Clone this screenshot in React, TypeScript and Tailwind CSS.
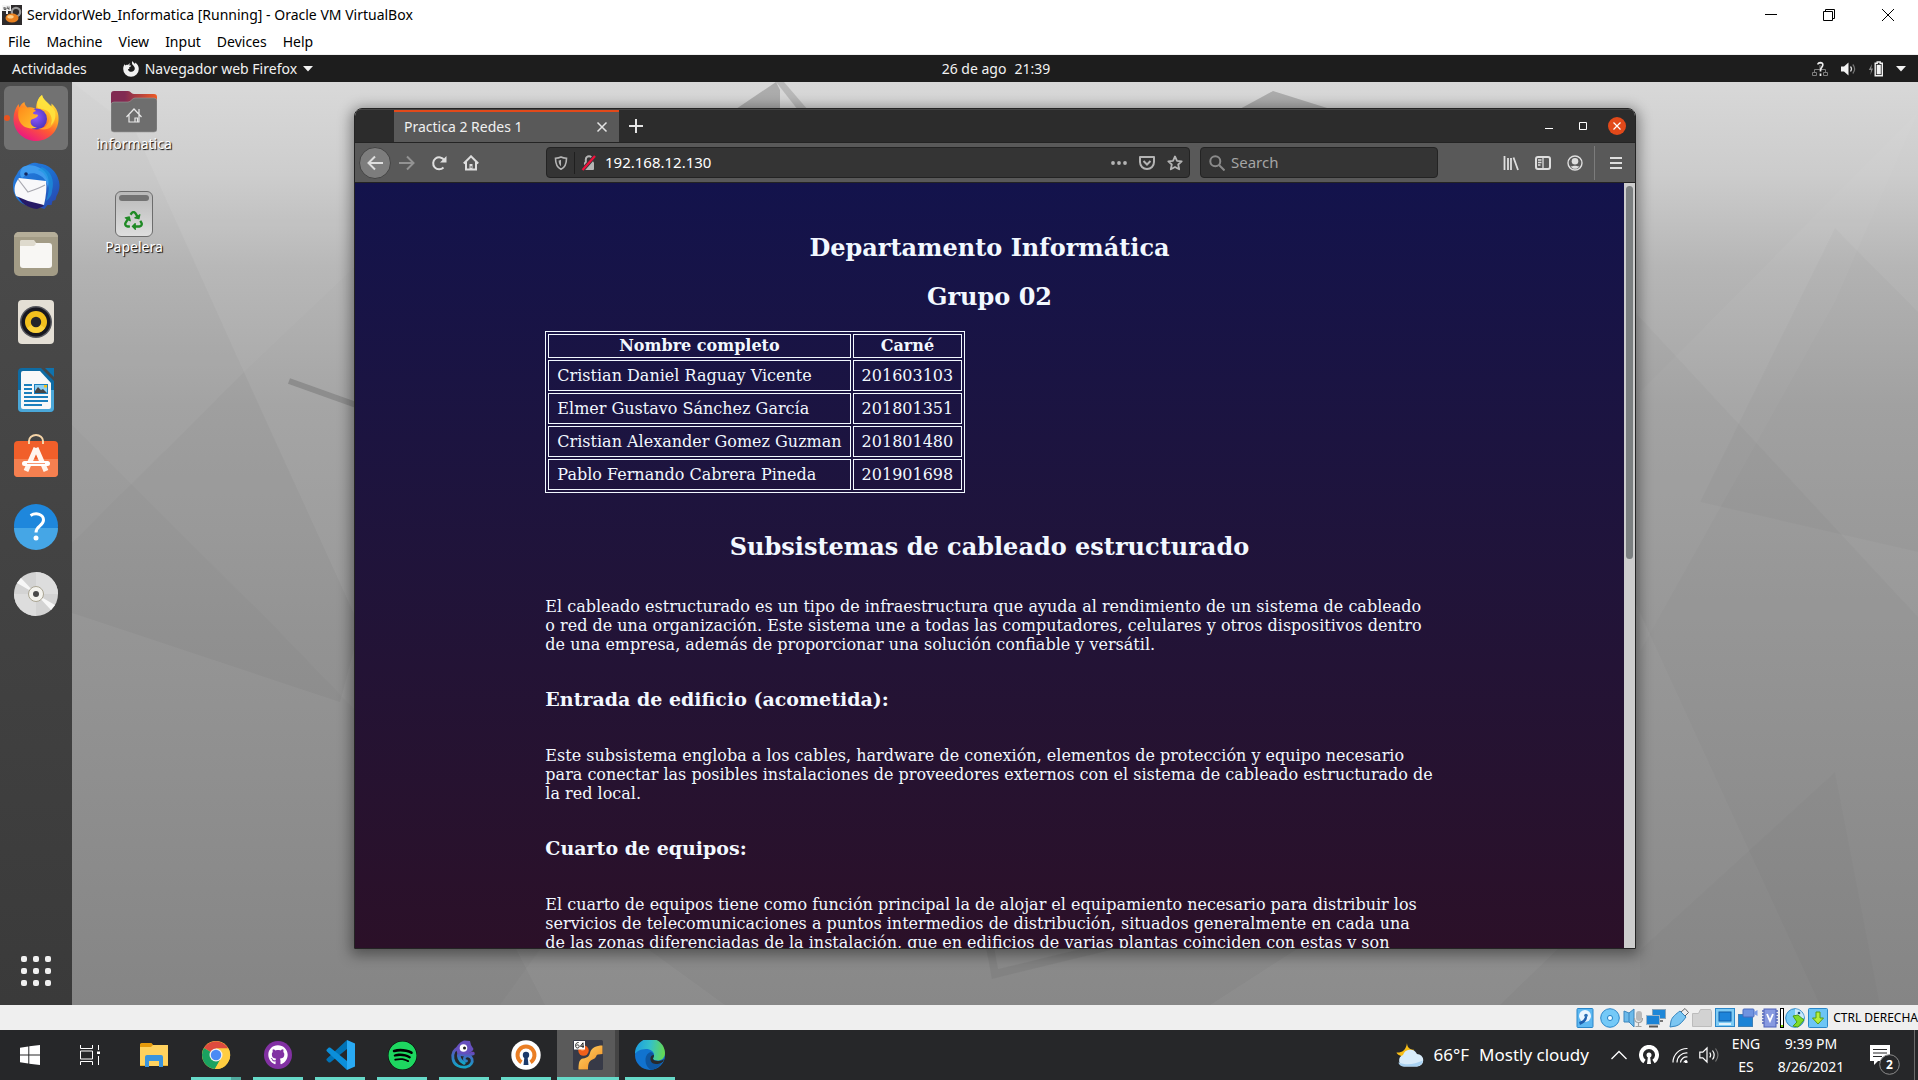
import React from 'react';
import { FaGithub, FaSpotify, FaRecycle } from 'react-icons/fa';

/* ---------- VirtualBox host window ---------- */

function VBoxLogo({ className }: { className: string }) {
  return (
    <svg viewBox="0 0 30 30" className={className} aria-hidden="true">
      <defs>
        <linearGradient id="vbGold" x1="0" y1="0" x2="1" y2="1">
          <stop offset="0" stopColor="#ffd56b" />
          <stop offset="1" stopColor="#f08a1c" />
        </linearGradient>
      </defs>
      <rect width="30" height="30" rx="1.5" fill="#373a47" />
      <circle cx="10.5" cy="10.5" r="5.2" fill="#f2601a" />
      <circle cx="9.5" cy="9" r="2" fill="#ff8d45" />
      <path d="M29.500 5.500C23 5.500 18.500 7.500 17 13c-.8 3-2.500 5-7 5.500-3.500.6-4.500 4-4.500 11H15c0-6 1-9 5.500-10.500C24 17.500 22.500 15 25 14.500l4.500-.5z" fill="url(#vbGold)" />
      <rect x="1" y="1" width="11" height="8.500" fill="#fff" />
      <path d="M5.600 2.500c-2 0-3 1.200-3 3s.9 2.500 1.900 2.500 1.700-.7 1.700-1.600-.7-1.500-1.600-1.500c-.6 0-1 .2-1.300.6M10 8V2.800L7.400 6.300h3.600" stroke="#222" strokeWidth="1" fill="none" />
    </svg>
  );
}

function TitleLogo() {
  return (
    <svg viewBox="0 0 20 20" className="size-5" aria-hidden="true">
      <rect width="20" height="20" fill="#2e2b2c" />
      <circle cx="14" cy="7" r="4.200" fill="none" stroke="#9a9a9a" strokeWidth="2.200" />
      <ellipse cx="10" cy="13" rx="6.500" ry="4.500" fill="#e8801f" />
      <ellipse cx="8.500" cy="11.800" rx="3.200" ry="1.800" fill="#ffd08a" />
      <path d="M0 0h9v6H6v3H4V6H0z" fill="#f4f4f4" />
      <path d="M2 2v2.500h2V3H2M7 1.500V5M5.300 1.500v2H7" stroke="#444" strokeWidth=".8" fill="none" />
    </svg>
  );
}

function HostTitle() {
  return (
    <header className="bg-white text-black">
      <div className="flex h-[29px] items-center">
        <div className="flex flex-1 items-center gap-[5px] pl-0.5 text-sm">
          <TitleLogo />
          <h1>ServidorWeb_Informatica [Running] - Oracle VM VirtualBox</h1>
        </div>
        <button aria-label="Minimize" className="grid h-7 w-[58px] place-items-center">
          <svg viewBox="0 0 12 12" className="size-3"><path d="M0 5.500h12" stroke="#000" /></svg>
        </button>
        <button aria-label="Restore" className="grid h-7 w-[58px] place-items-center">
          <svg viewBox="0 0 12 12" className="size-3"><path d="M.5 2.500h9v9h-9zM2.500 2.500v-2h9v9h-2" fill="none" stroke="#000" /></svg>
        </button>
        <button aria-label="Close" className="grid h-7 w-[60px] place-items-center">
          <svg viewBox="0 0 12 12" className="size-3"><path d="M0 0l12 12M12 0L0 12" stroke="#000" /></svg>
        </button>
      </div>
      <nav className="flex h-[26px] items-center border-b border-[#f0f0f0] text-sm">
        {['File', 'Machine', 'View', 'Input', 'Devices', 'Help'].map((m) => (
          <button key={m} className="px-2">{m}</button>
        ))}
      </nav>
    </header>
  );
}

/* ---------- Ubuntu top bar ---------- */

function UbuntuBar() {
  return (
    <div className="grid h-[27px] shrink-0 grid-cols-3 items-center bg-[#1d1d1d] text-sm text-[#f2f2f2]">
      <div className="flex items-center gap-9 pl-3">
        <button>Actividades</button>
        <button className="flex items-center gap-1.5">
          <svg viewBox="0 0 16 16" className="size-4" fill="#f2f2f2">
            <path d="M9.500 0c.3 1.200 1.500 2 2.500 3 .2-.5.200-1 .1-1.500C14.500 3 15.800 5.300 15.800 8a7.800 7.800 0 0 1-15.600 0C.2 6 .8 4.300 1.800 3c0 .6.100 1 .3 1.400C2.800 3.700 4 3.500 5 3.900c.8-.9 1.500-1.200 2.300-1.300-.8.700-1 1.400-.9 1.900h1.800c-.2 1.100-1.400 1.400-2 1.800.1 1 .2 1.400.2 1.400-.8 0-1.200.2-1.500.5.5 1.800 1.800 2.600 3.400 2.600 2 0 3.500-1.400 3.500-3.300 0-1.500-.9-2.500-1.700-3.300C9 3.300 8.400 1.600 9.500 0z" />
          </svg>
          <span>Navegador web Firefox</span>
          <svg viewBox="0 0 10 6" className="h-1.5 w-2.5"><path d="M0 0h10L5 5.500z" fill="#f2f2f2" /></svg>
        </button>
      </div>
      <div className="flex justify-center gap-2 pl-[74px]">
        <span>26 de ago</span>
        <span>21:39</span>
      </div>
      <div className="flex items-center justify-end gap-3 pr-3">
        <svg viewBox="0 0 16 16" className="size-4" aria-label="Red">
          <path d="M8 4v4M2.500 11V8.500h11V11M.5 11.500h4v3h-4zM11.500 11.500h4v3h-4zM5.500 2.500h4" fill="none" stroke="#7d7d7d" />
          <path d="M6 3.500C6 1 11 .8 10.800 4 10.700 6.300 8.500 6.500 8.500 9.500v1M8.500 12.500v2.500" fill="none" stroke="#eee" strokeWidth="1.700" />
        </svg>
        <svg viewBox="0 0 16 14" className="h-3.5 w-4" aria-label="Volumen">
          <path d="M1 4.500h3L8.500.5v13L4 9.500H1z" fill="#f2f2f2" />
          <path d="M10.500 4.500c1.300 1.500 1.300 3.500 0 5" fill="none" stroke="#ddd" strokeWidth="1.200" />
          <path d="M12.800 2.500c2.300 2.800 2.300 6.200 0 9" fill="none" stroke="#777" strokeWidth="1.200" />
        </svg>
        <svg viewBox="0 0 16 16" className="size-4" aria-label="Batería">
          <path d="M4 3L.8 9H3l-.6 5L5 7.500H3.200z" fill="#8a8a8a" />
          <path d="M7.200 2.200h2V1h3v1.200h2.100v12.600H7.200z" fill="none" stroke="#f2f2f2" strokeWidth="1.400" />
          <rect x="8.700" y="3.800" width="4.100" height="9.500" fill="#f2f2f2" />
        </svg>
        <svg viewBox="0 0 10 6" className="h-1.5 w-2.5"><path d="M0 0h10L5 5.500z" fill="#f2f2f2" /></svg>
      </div>
    </div>
  );
}

/* ---------- Dock ---------- */

function FirefoxIcon() {
  return (
    <svg viewBox="0 0 48 48" className="size-12">
      <defs>
        <linearGradient id="ffBody" x1=".85" y1="0" x2=".25" y2="1">
          <stop offset="0" stopColor="#fff04a" />
          <stop offset=".35" stopColor="#ffb024" />
          <stop offset=".62" stopColor="#ff5a32" />
          <stop offset="1" stopColor="#e8118a" />
        </linearGradient>
        <radialGradient id="ffGlobe" cx=".45" cy=".4" r=".65">
          <stop offset="0" stopColor="#8f5bff" />
          <stop offset="1" stopColor="#4b32b8" />
        </radialGradient>
        <linearGradient id="ffFox" x1="0" y1="0" x2="1" y2="1">
          <stop offset="0" stopColor="#ff8a1a" />
          <stop offset="1" stopColor="#ffc62e" />
        </linearGradient>
      </defs>
      <path d="M30 1c1 5 6 8 9 12 .5-1 .6-2 .4-3.500C45 14 47 20 46.500 26 46 38 36 47 24 47S1.500 37.500 1.500 25c0-6 2-11 5-15l1 3.500C8.500 11 10 9 12.500 8c0 2 1 4 3 5.500 4-1 7.500.5 8.500 1.500C24 9 26 4 30 1z" fill="url(#ffBody)" />
      <circle cx="24.500" cy="25" r="10.500" fill="url(#ffGlobe)" />
      <path d="M7.500 13.500C12 12 15.500 13.500 16.500 15c3-1 6 0 7.500 2-2 .5-3 1.500-3 2.500 2 1.500 5 .5 5 2-1.500 3-5 3-7 4.500-1.500 4 1.500 7 6 7.500C17 36 10 33 7.500 27c-2-5-1.500-10 0-13.500z" fill="url(#ffFox)" />
      <path d="M27 14c6 0 10 4 10.500 9 .5 7-5 12-11.500 11.500 9 3.500 17-2 17.500-11C43.500 18 41 14 38 12c-3-1-8-1-11 2z" fill="#ffb52b" opacity=".75" />
      <path d="M30 1c-4 3-5.500 8-4.500 12.500 3 2 8 1 11.500 5 3 4 3.500 9 1.500 13 4-3 6-9 4.500-14-1.500-4-5-6.500-7.500-9C33 6 30.500 4 30 1z" fill="#ffe63f" opacity=".85" />
    </svg>
  );
}

function ThunderbirdIcon() {
  return (
    <svg viewBox="0 0 48 48" className="size-12">
      <defs>
        <linearGradient id="tbBlue" x1="0" y1="0" x2="1" y2="1">
          <stop offset="0" stopColor="#2a7de0" />
          <stop offset=".5" stopColor="#1d6fd0" />
          <stop offset="1" stopColor="#2b3fa8" />
        </linearGradient>
      </defs>
      <path d="M21 1c4-1 6 1 9 1 10 2 17 11 17.500 21 0 4-1 8-3 11l-1 4-3 1-1 4-4 0-3 4-3-1-7-1C11 44 5 39 2 31c-2-7-1-14 3-19 1-3 3-5 6-7 3 0 7-4 10-4z" fill="url(#tbBlue)" />
      <path d="M11 5c5-3 12-2 17 1 8 4 10 12 8 20-1-6-4-11-9-13-5-3-12-2-17 3-3-3-2-8 1-11z" fill="#3f9bee" />
      <path d="M30 5c9 4 13 13 10 24 0 4-3 8-6 10 3-8 4-16 1-22-2-5-5-8-9-9z" fill="#1a9ae0" opacity=".6" />
      <path d="M5 32c3 9 11 14 20 15l7-3-6-5-18-7z" fill="#261a66" />
      <path d="M7 16l27 3c1 7 0 15-2 24L16 39 4 34C1 27 3 21 7 16z" fill="#f8f8fa" />
      <path d="M6 17l10 13c6-2 12-4 17-7" fill="none" stroke="#a8a8b0" strokeWidth="1.200" />
      <circle cx="14" cy="12" r="1.800" fill="#152860" />
    </svg>
  );
}

function FilesIcon() {
  return (
    <svg viewBox="0 0 48 48" className="size-12">
      <rect x="2" y="2" width="44" height="44" rx="5" fill="#a39c86" />
      <path d="M2 7a5 5 0 0 1 5-5h34a5 5 0 0 1 5 5z" fill="#b5ae99" />
      <path d="M8 12a2 2 0 0 1 2-2h12l3 4h13v8H8z" fill="#dedacd" />
      <rect x="8" y="13" width="32" height="25" rx="3" fill="#f8f7f4" />
      <path d="M8 16v-4a2 2 0 0 1 2-2h10l4 4-2 2z" fill="#dedacd" />
    </svg>
  );
}

function RhythmboxIcon() {
  return (
    <svg viewBox="0 0 48 48" className="size-12">
      <rect x="6" y="2" width="36" height="44" rx="4" fill="#e4dfd5" />
      <circle cx="24" cy="24" r="16" fill="#55565c" />
      <circle cx="24" cy="24" r="14.500" fill="#17171f" />
      <circle cx="24" cy="24" r="11" fill="#f2bf1d" />
      <path d="M24 35a11 11 0 0 0 9-5L24 24l-9 6a11 11 0 0 0 9 5z" fill="#ffd84a" opacity=".7" />
      <circle cx="24" cy="24" r="5.200" fill="#24242a" />
    </svg>
  );
}

function WriterIcon() {
  return (
    <svg viewBox="0 0 48 48" className="size-12">
      <path d="M10 2h19l13 13v27a4 4 0 0 1-4 4H10a4 4 0 0 1-4-4V6a4 4 0 0 1 4-4z" fill="#0e6ba3" />
      <path d="M6 24h36v18a4 4 0 0 1-4 4H10a4 4 0 0 1-4-4z" fill="#4aa7d8" />
      <path d="M33 2h9v9z" fill="#0f73ae" />
      <path d="M11 5h17l11 12v24a2 2 0 0 1-2 2H11a2 2 0 0 1-2-2V7a2 2 0 0 1 2-2z" fill="#f8f8f8" />
      <path d="M12 19h8M12 23h8M12 27h8M12 31h24M12 35h24M12 39h18" stroke="#1a7fbd" strokeWidth="2" />
      <rect x="22.500" y="18.500" width="13" height="9" fill="#8fd0f2" stroke="#1a7fbd" />
      <path d="M23 27v-2l3-4 3 3 2-1 4 4z" fill="#444" />
      <rect x="32" y="19" width="3" height="2.500" fill="#f4c21c" />
    </svg>
  );
}

function SoftwareIcon() {
  return (
    <svg viewBox="0 0 48 48" className="size-12">
      <path d="M17 9V7a7 6 0 0 1 14 0v2" fill="none" stroke="#f6d5a8" strokeWidth="2" />
      <rect x="2" y="7" width="44" height="36" rx="4" fill="#f15f2a" />
      <path d="M2 25h44v14a4 4 0 0 1-4 4H6a4 4 0 0 1-4-4z" fill="#f58050" />
      <path d="M17 10V7M31 10V7" stroke="#f6d5a8" strokeWidth="2" />
      <path d="M24 14L14 37M24 14l10 23" stroke="#fff5ee" strokeWidth="5" />
      <rect x="10" y="27" width="28" height="5" rx="2.500" fill="#fff" />
      <path d="M15 29.500h18" stroke="#f58050" strokeWidth=".8" />
    </svg>
  );
}

function HelpIcon() {
  return (
    <svg viewBox="0 0 48 48" className="size-12">
      <circle cx="24" cy="24" r="22" fill="#1e87dc" />
      <path d="M2 26h44a22 22 0 0 1-44 0z" fill="#45a6e6" />
      <path d="M18.500 13.500c6-3.500 13-1 13 4.500 0 6-7.500 6-7.500 12.500" fill="none" stroke="#fff" strokeWidth="3" />
      <circle cx="24" cy="36" r="2.500" fill="#fff" />
    </svg>
  );
}

function DiscIcon() {
  return (
    <svg viewBox="0 0 48 48" className="size-12">
      <circle cx="24" cy="24" r="22" fill="#d3d3d3" />
      <path d="M24 24V2a22 22 0 0 1 22 22zM24 24v22A22 22 0 0 1 2 24z" fill="#dddddd" />
      <path d="M24 24L5 13l4-5zM24 24l19 11-4 5z" fill="#f7f7f7" />
      <circle cx="24" cy="24" r="7.500" fill="#f4f3ee" stroke="#aaa593" />
      <circle cx="24" cy="24" r="3" fill="#4a4a4a" />
    </svg>
  );
}

const dock: [string, () => React.JSX.Element][] = [
  ['Firefox', FirefoxIcon],
  ['Thunderbird', ThunderbirdIcon],
  ['Archivos', FilesIcon],
  ['Rhythmbox', RhythmboxIcon],
  ['LibreOffice Writer', WriterIcon],
  ['Ubuntu Software', SoftwareIcon],
  ['Ayuda', HelpIcon],
  ['Disco', DiscIcon],
];

function Dock() {
  return (
    <aside className="relative flex w-[72px] shrink-0 flex-col items-center gap-1 bg-linear-to-b from-[#4d4d4d] via-[#434343] to-[#3a3a3a] pt-1">
      {dock.map(([name, Icon], i) => (
        <button
          key={name}
          aria-label={name}
          className={i === 0 ? 'grid size-16 place-items-center rounded-md bg-[#727272]' : 'grid size-16 place-items-center'}
        >
          {i === 0 && <span className="absolute left-1 size-1.5 rounded-full bg-[#e95420]" />}
          <Icon />
        </button>
      ))}
      <button aria-label="Mostrar aplicaciones" className="mt-auto mb-[19px] grid grid-cols-3 gap-1.5">
        {Array.from({ length: 9 }, (_, i) => (
          <span key={i} className="size-1.5 rounded-[2px] bg-[#f0f0f0]" />
        ))}
      </button>
    </aside>
  );
}

/* ---------- Desktop ---------- */

function Wallpaper() {
  return (
    <svg viewBox="0 0 1918 923" preserveAspectRatio="none" className="absolute inset-0 size-full" aria-hidden="true">
      <defs>
        <linearGradient id="wall" x1="0" y1="0" x2="0" y2="1">
          <stop offset="0" stopColor="#d8d8d8" />
          <stop offset=".1" stopColor="#cccccc" />
          <stop offset=".2" stopColor="#b6b6b6" />
          <stop offset=".35" stopColor="#a5a5a5" />
          <stop offset=".6" stopColor="#989898" />
          <stop offset="1" stopColor="#888888" />
        </linearGradient>
      </defs>
      <rect width="1918" height="923" fill="url(#wall)" />
      <path d="M135 48L244 290 72 461V0z" fill="#000" opacity=".012" />
      <path d="M244 290L72 461v70L340 620 360 545z" fill="#000" opacity=".03" />
      <path d="M72 343L278 548 560 840 500 923H72z" fill="#000" opacity=".015" />
      <path d="M135 48L244 290 360 180V0H150z" fill="#fff" opacity=".03" />
      <path d="M1918 30L1640 310v260l195-350z" fill="#fff" opacity=".03" />
      <path d="M1835 146L1918 230v240L1700 420z" fill="#000" opacity=".02" />
      <path d="M1635 230L1918 535v388H1820L1635 520z" fill="#000" opacity=".018" />
      <path d="M1835 690L1640 868v55h240z" fill="#000" opacity=".015" />
      <path d="M515 865L545 923h180l-80-58z" fill="#fff" opacity=".04" />
      <path d="M1300 865l-90 58h290l60-58z" fill="#fff" opacity=".04" />
      <path d="M289 299l70 25" stroke="#8d8d8d" strokeWidth="6" />
      <path d="M736 27L776 0l4 8v20z" fill="#000" opacity=".2" />
      <path d="M776 0h8l24 28h-10z" fill="#000" opacity=".14" />
      <path d="M1238 28l35-19 70 22z" fill="#000" opacity=".2" />
      <path d="M990 865l5 27 115-28" stroke="#000" strokeWidth="8" fill="none" opacity=".05" />
    </svg>
  );
}

const iconLabel = 'text-sm leading-5 text-white [text-shadow:1px_1px_1px_#000]';

function DesktopIcons() {
  return (
    <div className="relative flex w-[124px] flex-col items-center gap-[37px] pt-2">
      <button className="flex flex-col items-center">
        <svg viewBox="0 0 46 44" className="h-11 w-[46px]">
          <defs>
            <linearGradient id="homeTop" x1="0" x2="1" y1="0" y2="0">
              <stop offset=".3" stopColor="#812a52" />
              <stop offset="1" stopColor="#ee5a24" />
            </linearGradient>
          </defs>
          <path d="M3 1h14c3 0 3 3 6 3h20a3 3 0 0 1 3 3v12H0V4a3 3 0 0 1 3-3z" fill="url(#homeTop)" />
          <path d="M3 12h14c3 0 4-4 7-4h19a3 3 0 0 1 3 3v28a3 3 0 0 1-3 3H3a3 3 0 0 1-3-3V15a3 3 0 0 1 3-3z" fill="#6e6e6e" stroke="#999" strokeWidth=".6" />
          <path d="M15.500 27L23 19l7.500 8M18 25v7h10v-7M24 32v-4h2.500v4M28 24v-5" fill="none" stroke="#e8e8e8" strokeWidth="1.200" />
        </svg>
        <span className={iconLabel}>informatica</span>
      </button>
      <button className="flex flex-col items-center">
        <span className="flex h-[46px] w-[38px] flex-col items-center gap-2.5 rounded-md border border-[#6d6d6d] bg-linear-to-b from-[#b9b9b9] to-[#dedede] pt-[3px]">
          <span className="h-1.5 w-[30px] rounded-sm bg-[#737373]" />
          <FaRecycle className="size-[19px] text-[#1f8a25]" />
        </span>
        <span className={iconLabel}>Papelera</span>
      </button>
    </div>
  );
}

/* ---------- Firefox window ---------- */

function TabBar() {
  return (
    <div className="flex h-[33px] shrink-0 items-stretch border-t border-[#454545] bg-[#2c2c2c] pl-[39px]">
      <div className="flex w-[225px] items-center justify-between border-t-2 border-[#e2491a] bg-[#595959] pr-[11px] pl-2.5 text-sm">
        <span>Practica 2 Redes 1</span>
        <button aria-label="Cerrar pestaña">
          <svg viewBox="0 0 12 12" className="size-3"><path d="M1.500 1.500l9 9M10.500 1.500l-9 9" stroke="#e4e4e4" strokeWidth="1.500" /></svg>
        </button>
      </div>
      <button aria-label="Nueva pestaña" className="grid w-[34px] place-items-center">
        <svg viewBox="0 0 14 14" className="size-3.5"><path d="M7 0v14M0 7h14" stroke="#e4e4e4" strokeWidth="2" /></svg>
      </button>
      <div className="ml-auto flex items-center gap-4 pr-[9px]">
        <button aria-label="Minimizar" className="grid size-[18px] place-items-center">
          <svg viewBox="0 0 8 8" className="size-2"><path d="M0 6.500h8" stroke="#fff" /></svg>
        </button>
        <button aria-label="Maximizar" className="grid size-[18px] place-items-center">
          <svg viewBox="0 0 8 8" className="size-2"><path d="M.5.5h7v7h-7z" fill="none" stroke="#fff" /></svg>
        </button>
        <button aria-label="Cerrar" className="grid size-[18px] place-items-center rounded-full bg-[#e2491a]">
          <svg viewBox="0 0 8 8" className="size-2"><path d="M.5.5l7 7M7.500.5l-7 7" stroke="#fff" strokeWidth="1.200" /></svg>
        </button>
      </div>
    </div>
  );
}

function NavBar() {
  const s = { fill: 'none', stroke: '#dedede', strokeWidth: 2 } as const;
  const m = { fill: 'none', stroke: '#b4b4b4', strokeWidth: 2 } as const;
  return (
    <div className="flex h-[41px] shrink-0 items-center border-t border-b border-[#242424] bg-[#595959] pr-[11px] pl-1">
      <div className="flex w-[187px] shrink-0 items-center gap-4">
        <button aria-label="Atrás" className="-mr-2 grid size-8 place-items-center rounded-full border border-[#444] bg-[#7d7d7d]">
          <svg viewBox="0 0 16 16" className="size-4"><path d="M16 8H1.500M8 1.500L1.500 8 8 14.500" {...s} /></svg>
        </button>
        <button aria-label="Adelante">
          <svg viewBox="0 0 16 16" className="size-4"><path d="M0 8h14.500M8 1.500L14.500 8 8 14.500" fill="none" stroke="#939393" strokeWidth="2" /></svg>
        </button>
        <button aria-label="Recargar">
          <svg viewBox="0 0 16 16" className="size-4"><path d="M12.500 12.500A6 6 0 1 1 13.200 5" {...s} /><path d="M15.500 1v6.500H9z" fill="#dedede" /></svg>
        </button>
        <button aria-label="Inicio">
          <svg viewBox="0 0 16 16" className="size-4"><path d="M.8 8.500L8 1.300l7.200 7.200M3 7v7.500h10V7" {...s} /><path d="M6.500 9h3v6h-3z" fill="#dedede" /><path d="M7.600 11h1v2h-1z" fill="#595959" /></svg>
        </button>
      </div>
      <div className="flex h-[31px] flex-1 items-center rounded border border-[#232323] bg-[#343434] pr-1.5 pl-[7px]">
        <svg viewBox="0 0 14 14" className="size-3.5 shrink-0"><path d="M7 1C5 2 3 2.200 1.500 2.200 1.500 8 3 11.500 7 13.200 11 11.500 12.500 8 12.500 2.200 11 2.200 9 2 7 1z" {...m} strokeWidth={1.600} /><path d="M7 3.800v6.500c-1.500-1-2.300-3-2.400-5.800.9-.1 1.700-.3 2.400-.7z" fill="#b4b4b4" /></svg>
        <span className="mx-1.5 h-[22px] w-px shrink-0 bg-[#1f1f1f]" />
        <svg viewBox="0 0 16 16" className="size-4 shrink-0"><path d="M4.800 7V4.500a3.200 3.200 0 0 1 6.400 0V7" {...m} /><rect x="3" y="7" width="10" height="8" rx="1" fill="#b4b4b4" /><path d="M1.500 15L14 1" stroke="#343434" strokeWidth="4" /><path d="M1.500 15L14 1" stroke="#f0103c" strokeWidth="2.200" /></svg>
        <input aria-label="Dirección" defaultValue="192.168.12.130" className="ml-2 min-w-0 flex-1 bg-transparent text-[15px] text-white outline-none" />
        <div className="flex shrink-0 items-center gap-3">
          <button aria-label="Acciones"><svg viewBox="0 0 16 16" className="size-4" fill="#b4b4b4"><circle cx="2" cy="8" r="1.900" /><circle cx="8" cy="8" r="1.900" /><circle cx="14" cy="8" r="1.900" /></svg></button>
          <button aria-label="Pocket"><svg viewBox="0 0 16 16" className="size-4"><path d="M1 2h14v5c0 4-3 7-7 7S1 11 1 7z" {...m} strokeLinejoin="round" /><path d="M4.500 6L8 9.500 11.500 6" {...m} /></svg></button>
          <button aria-label="Marcador"><svg viewBox="0 0 16 16" className="size-4"><path d="M8 1.500l2 4.300 4.700.5-3.500 3.200 1 4.800L8 12l-4.200 2.300 1-4.800L1.300 6.300 6 5.800z" {...m} strokeWidth={1.800} strokeLinejoin="round" /></svg></button>
        </div>
      </div>
      <label className="ml-2.5 flex h-[31px] w-[238px] shrink-0 items-center gap-1.5 rounded border border-[#232323] bg-[#343434] px-2 text-[15px]">
        <svg viewBox="0 0 16 16" className="size-4"><circle cx="6.300" cy="6.300" r="5" fill="none" stroke="#8a8a8a" strokeWidth="2" /><path d="M10 10l5.500 5.500" stroke="#8a8a8a" strokeWidth="2" /></svg>
        <input aria-label="Buscar" placeholder="Search" className="min-w-0 flex-1 bg-transparent outline-none placeholder:text-[#a5a5a5]" />
      </label>
      <div className="ml-[65px] flex shrink-0 items-center gap-4">
        <button aria-label="Biblioteca"><svg viewBox="0 0 16 16" className="size-4"><path d="M1.500 1v14M5 3v12M8 3v12M10.500 2.500L15 15" {...s} strokeWidth={1.800} /></svg></button>
        <button aria-label="Barra lateral"><svg viewBox="0 0 16 16" className="size-4"><rect x="1" y="2" width="14" height="12" rx="2" {...s} /><path d="M8 2v12M3 5h3.500M3 7.500h3.500M3 10h2.500" {...s} strokeWidth={1.300} /></svg></button>
        <button aria-label="Cuenta"><svg viewBox="0 0 16 16" className="size-4"><circle cx="8" cy="8" r="7" {...s} strokeWidth={1.400} /><circle cx="8" cy="6.300" r="3.300" fill="#dedede" /><path d="M3.500 11c1.500 1 2.500-.3 4.500-.3s3 1.300 4.500.3C11.500 13 10 13.800 8 13.800S4.500 13 3.500 11z" fill="#dedede" /></svg></button>
      </div>
      <span className="ml-[11px] h-[34px] w-px bg-[#7c7c7c]" />
      <button aria-label="Menú" className="ml-[13px]"><svg viewBox="0 0 16 16" className="size-4"><path d="M2 3h12M2 8h12M2 13h12" {...s} /></svg></button>
    </div>
  );
}

const people = [
  ['Cristian Daniel Raguay Vicente', '201603103'],
  ['Elmer Gustavo Sánchez García', '201801351'],
  ['Cristian Alexander Gomez Guzman', '201801480'],
  ['Pablo Fernando Cabrera Pineda', '201901698'],
];

const h3 = 'mt-[34px] text-[19px] leading-[22px] font-bold';
const para = 'mt-9 text-base leading-[19px]';

function WebPage() {
  return (
    <div className="flex min-h-0 flex-1 bg-linear-to-b from-[#13134c] to-[#2b1028] text-[#f2f8ff]">
      <div className="flex-1 overflow-hidden font-[DejaVu_Serif,serif]">
        <main className="mx-auto w-[70%] pt-[50px]">
          <h2 className="text-center text-2xl leading-[29px] font-bold">Departamento Informática</h2>
          <h2 className="mt-5 text-center text-2xl leading-[29px] font-bold">Grupo 02</h2>
          <table className="mt-5 border-separate border-spacing-0.5 border border-current text-base leading-[19px]">
            <thead>
              <tr className="leading-5">
                <th className="border border-current px-2 py-px">Nombre completo</th>
                <th className="border border-current px-2 py-px">Carné</th>
              </tr>
            </thead>
            <tbody>
              {people.map(([name, id]) => (
                <tr key={id}>
                  <td className="border border-current px-2 py-[5px]">{name}</td>
                  <td className="border border-current px-2 py-[5px]">{id}</td>
                </tr>
              ))}
            </tbody>
          </table>
          <h2 className="mt-[39px] text-center text-2xl leading-[29px] font-bold">Subsistemas de cableado estructurado</h2>
          <p className={para}>
            El cableado estructurado es un tipo de infraestructura que ayuda al rendimiento de un sistema de cableado o red de una
            organización. Este sistema une a todas las computadores, celulares y otros dispositivos dentro de una empresa, además de
            proporcionar una solución confiable y versátil.
          </p>
          <h3 className={h3}>Entrada de edificio (acometida):</h3>
          <p className={para}>
            Este subsistema engloba a los cables, hardware de conexión, elementos de protección y equipo necesario para conectar las
            posibles instalaciones de proveedores externos con el sistema de cableado estructurado de la red local.
          </p>
          <h3 className={h3}>Cuarto de equipos:</h3>
          <p className={para}>
            El cuarto de equipos tiene como función principal la de alojar el equipamiento necesario para distribuir los servicios de
            telecomunicaciones a puntos intermedios de distribución, situados generalmente en cada una de las zonas diferenciadas de
            la instalación, que en edificios de varias plantas coinciden con estas y son
          </p>
        </main>
      </div>
      <div className="w-[11px] shrink-0 bg-[#cdcdcd] px-0.5 pt-[3px]">
        <div className="h-[49%] rounded-full bg-[#7b7f80]" />
      </div>
    </div>
  );
}

function FirefoxWindow() {
  return (
    <section className="absolute top-[26px] right-[282px] bottom-14 left-[354px] flex flex-col overflow-hidden rounded-t-lg border border-[#242424] text-[#f0f0f0] shadow-[0_3px_14px_3px_rgba(0,0,0,0.4)]">
      <TabBar />
      <NavBar />
      <WebPage />
    </section>
  );
}

/* ---------- VirtualBox status bar ---------- */

function StatusBar() {
  const b = { stroke: '#2a86c8', strokeWidth: 1 } as const;
  return (
    <div className="flex h-[25px] shrink-0 items-center justify-end gap-[3px] overflow-hidden bg-[#efefef]">
      <svg viewBox="0 0 20 20" className="mr-0.5 size-5"><rect x="2" y=".5" width="16" height="19" rx="1" fill="#5cb8f2" {...b} /><circle cx="10" cy="8" r="6" fill="#e8f5ff" /><circle cx="11" cy="7.500" r="1.800" fill="#2a6fb5" /><path d="M12 9c0 4-3 6-7 8l-1-3c4-1 5-3 6-5z" fill="#1d5fae" /></svg>
      <svg viewBox="0 0 20 20" className="size-5"><circle cx="10" cy="10" r="9.300" fill="#74c9f7" {...b} /><circle cx="10" cy="10" r="2.600" fill="#dff3ff" {...b} /><circle cx="10" cy="10" r="1" fill="#fff" /></svg>
      <svg viewBox="0 0 20 20" className="size-5"><path d="M1 3v11h5l5 5V1L6 5z" fill="#6bb9ea" stroke="#3d86bd" /><path d="M6 5v9" stroke="#3d86bd" /><rect x="13" y="3" width="6" height="10" rx="3" fill="#b9b9b9" /><path d="M11.500 10c0 6 8 6 8 0M15.500 14v4M12.500 18.500h6" stroke="#a2a2a2" fill="none" strokeWidth="1.200" /></svg>
      <svg viewBox="0 0 20 20" className="size-5"><rect x="6.500" y="1.500" width="13" height="9" fill="#1e87d8" stroke="#8aa4b8" /><path d="M11 13h6" stroke="#777" strokeWidth="2" /><rect x=".5" y="7.500" width="13" height="9" fill="#1b83d6" stroke="#9cb5c8" /><path d="M3 18.500h9" stroke="#555" strokeWidth="2" /></svg>
      <svg viewBox="0 0 20 20" className="size-5"><path d="M12 4l4-3.500 3.500 4L16 8z" fill="#eee" stroke="#666" /><path d="M1 19l1-6c1-4 5-7 9-10l6 6c-3 4-6 8-10 9z" fill="#7cc6f2" stroke="#3484be" /></svg>
      <svg viewBox="0 0 20 20" className="size-5"><path d="M.5 5.500h6l2-4h10l1 2v15H.5z" fill="#d2d2d2" stroke="#bcbcbc" /></svg>
      <svg viewBox="0 0 20 20" className="size-5"><rect x=".5" y=".5" width="19" height="18" fill="#7ecbf5" {...b} /><rect x="4" y="4" width="12" height="9" fill="#1c84da" stroke="#0f5da6" /><path d="M4 16h12" stroke="#fff" strokeWidth="1.500" /></svg>
      <svg viewBox="0 0 20 20" className="size-5"><rect x=".5" y="6.500" width="14" height="12" fill="#1b83d6" stroke="#3d7fb5" /><rect x="5" y="1" width="11" height="8" rx="1" fill="#6f93e0" stroke="#4a6bbd" /><path d="M16 4l3.500-2v6L16 6z" fill="#7c9ce5" /></svg>
      <svg viewBox="0 0 18 20" className="h-5 w-[18px]"><rect x="3" y="1" width="12" height="18" fill="#8799e0" stroke="#4f61b8" /><path d="M1 3h2M1 6h2M1 9h2M1 12h2M1 15h2M15 3h2M15 6h2M15 9h2M15 12h2M15 15h2" stroke="#4f61b8" strokeWidth="1.500" /><path d="M6 6l3 7 3-7" stroke="#fff" strokeWidth="1.800" fill="none" /></svg>
      <span className="-mx-0.5 flex h-5 w-1 items-end border border-black bg-white"><span className="h-0.5 w-full bg-lime-500" /></span>
      <svg viewBox="0 0 20 20" className="size-5"><circle cx="10" cy="10" r="9.300" fill="#74c9f7" {...b} /><path d="M10 1a9 9 0 0 1 9 9H10z" fill="#c8e8fb" /><path d="M8 8l5-1 6 5-6 7-5-1 4-4z" fill="#7fdb2a" stroke="#4b9c15" /><circle cx="14" cy="5" r="1.300" fill="#164b82" /></svg>
      <svg viewBox="0 0 20 20" className="size-5"><rect x=".5" y=".5" width="19" height="19" rx="1" fill="#6cc5f5" {...b} /><path d="M8 4h4v6h3.500L10 16l-5.500-6H8z" fill="#b8ef3c" stroke="#559c12" /></svg>
      <span className="ml-0.5 text-xs whitespace-nowrap text-black">CTRL DERECHA</span>
    </div>
  );
}

/* ---------- Windows taskbar ---------- */

function ExplorerIcon() {
  return (
    <svg viewBox="0 0 30 30" className="size-[30px]">
      <path d="M1 4h11l2 1h15v21H1z" fill="#ffd25e" />
      <path d="M1 4.500A1.500 1.500 0 0 1 2.500 3h10L14 5l-2 2H1z" fill="#e59a0b" />
      <path d="M6 27V17a2 2 0 0 1 2-2h14a2 2 0 0 1 2 2v10h-4v-6h-10v6z" fill="#3a94dd" />
      <path d="M1 25h5v1H1zM24 25h5v1h-5z" fill="#f0b429" />
    </svg>
  );
}
function ChromeIcon() {
  return (
    <svg viewBox="0 0 30 30" className="size-[30px]">
      <circle cx="15" cy="15" r="14" fill="#ffcd40" />
      <path d="M15 15L2.900 8A14 14 0 0 1 27.100 8.500H15z" fill="#dd4b3e" />
      <path d="M15 15L2.900 8a14 14 0 0 0 11 21L20 18z" fill="#1aa260" />
      <path d="M27.500 8.500H15L20.500 18 14 29A14 14 0 0 0 27.500 8.500z" fill="#ffcd40" />
      <circle cx="15" cy="15" r="6.500" fill="#f1f1f1" />
      <circle cx="15" cy="15" r="5.200" fill="#4a8af4" />
    </svg>
  );
}
function GithubDesktopIcon() {
  return (
    <span className="grid size-7 place-items-center rounded-full bg-[#8231a3]">
      <FaGithub className="size-5 text-white" />
    </span>
  );
}
function CodeIcon() {
  return (
    <svg viewBox="0 0 30 30" className="size-[30px]">
      <path d="M22 0L2 18.500c-.8.800-.8 1.500 0 2.200l1.500 1.500c.6.500 1.300.5 2 0L22 9z" fill="#0072b5" />
      <path d="M22 30L2 11.500c-.8-.8-.8-1.500 0-2.200l1.500-1.500c.6-.5 1.300-.5 2 0L22 21z" fill="#0b8fda" />
      <path d="M22 0v30l8-3.500v-23z" fill="#29aaf4" />
    </svg>
  );
}
function SpotifyIcon() {
  return (
    <span className="grid size-[29px] place-items-center rounded-full bg-black">
      <FaSpotify className="size-[29px] text-[#1ed760]" />
    </span>
  );
}
function ChameleonIcon() {
  return (
    <svg viewBox="0 0 30 30" className="size-[30px]">
      <defs>
        <linearGradient id="cham" x1=".5" y1="0" x2=".4" y2="1">
          <stop offset="0" stopColor="#6b45b8" />
          <stop offset=".45" stopColor="#3f6fc4" />
          <stop offset="1" stopColor="#12a5c5" />
        </linearGradient>
      </defs>
      <g fill="none" stroke="url(#cham)" strokeLinecap="round">
        <path d="M11 7C5 9 3 13 4 19c1 6 7 9 13 8 5-1 7-5 6-8-1-3-5-4-7-2-1.500 2-.5 4 1.500 4" strokeWidth="2.800" />
        <path d="M10 12c-1 5 1 9 5 11M11 14c4 1 8 1 13-.5" strokeWidth="3.500" />
      </g>
      <path d="M12 2l3-1.500 6 .5 1 4 2.500 4c-1 3-4 4-8 5l-8-1-2-4c1-3 3-5 5.500-7z" fill="#6650be" />
      <circle cx="14.500" cy="8" r="3.800" fill="#fff" />
      <circle cx="15.500" cy="8" r="1.500" fill="#222" />
    </svg>
  );
}
function OpenVpnIcon() {
  return (
    <svg viewBox="0 0 30 30" className="size-[30px]">
      <circle cx="15" cy="15" r="14.700" fill="#fff" />
      <path d="M10.500 22.200a8.500 8.500 0 1 1 9 0" fill="none" stroke="#ea7e24" strokeWidth="4" />
      <circle cx="15" cy="15" r="3.200" fill="#1b3a6b" />
      <path d="M13.500 16h3l1 9h-5z" fill="#1b3a6b" />
    </svg>
  );
}
function EdgeIcon() {
  return (
    <svg viewBox="0 0 30 30" className="size-[30px]">
      <defs>
        <linearGradient id="edgeTop" x1="0" y1=".4" x2="1" y2=".5">
          <stop offset="0" stopColor="#1b9de0" />
          <stop offset=".5" stopColor="#35c1c8" />
          <stop offset="1" stopColor="#66d94f" />
        </linearGradient>
      </defs>
      <circle cx="15" cy="15" r="15" fill="#1173cf" />
      <path d="M0 14A15 15 0 0 1 30 13c0 5-3.500 7.500-7.500 7.500-3 0-4.500-1-4.500-2 0-1 1-1.500 1-3.500C19 11.500 15.500 9 11 9 5 9 1 12 0 14z" fill="url(#edgeTop)" />
      <path d="M10.500 20c0-5 3-7.500 5.500-8 2 .8 3 2 3 3.500 0 1.500-1 2-1 3 0 1.200 1.500 2.500 5 2.500 2.500 0 4-.6 5.500-1.500C26 26 21 29.500 16 30c-3-2-5.500-5-5.500-10z" fill="#0e56a0" />
      <path d="M19 15c0 2-1 2.500-1 3.500 0 1.200 1.500 2.500 5 2.500 3 0 5-1 6-2l-.8 2.500C26 23.500 23 24 21 24c-4 0-6-3-5.500-6 .2-2 1.500-3 3.500-3z" fill="#292a2b" />
    </svg>
  );
}

const apps: [string, () => React.JSX.Element][] = [
  ['Explorador de archivos', ExplorerIcon],
  ['Google Chrome', ChromeIcon],
  ['GitHub Desktop', GithubDesktopIcon],
  ['Visual Studio Code', CodeIcon],
  ['Spotify', SpotifyIcon],
  ['GNS3', ChameleonIcon],
  ['OpenVPN', OpenVpnIcon],
  ['Oracle VM VirtualBox', () => <VBoxLogo className="size-[30px]" />],
  ['Microsoft Edge', EdgeIcon],
];

function Taskbar() {
  return (
    <footer className="flex h-[50px] shrink-0 items-stretch justify-between bg-[#262729] text-white">
      <div className="flex">
        <button aria-label="Inicio" className="grid w-[60px] place-items-center">
          <svg viewBox="0 0 20 20" className="size-5" fill="#fff"><path d="M0 2.700l8.300-1.200v8H0zM9.300 1.300L20 0v9.500H9.300zM0 10.500h8.300v8L0 17.300zM9.300 10.500H20V20L9.300 18.700z" /></svg>
        </button>
        <button aria-label="Vista de tareas" className="mr-[3px] grid w-[60px] place-items-center">
          <svg viewBox="0 0 20 20" className="size-5" fill="none" stroke="#fff"><path d="M.5 0v3.500h12V0M.5 20v-3.500h12V20M.5 6h12v8H.5zM18.500 0v5M18.500 11v9" /><path d="M17 6.500h3v2.500h-3z" fill="#fff" stroke="none" /></svg>
        </button>
        {apps.map(([name, Icon]) => {
          const active = name === 'Oracle VM VirtualBox';
          return (
            <button
              key={name}
              aria-label={name}
              className={active ? 'relative grid w-[62px] place-items-center border-r-4 border-[#444444] bg-[#5a5a5a] pl-1' : 'relative grid w-[62px] place-items-center'}
            >
              <Icon />
              {name !== 'Explorador de archivos' && (
                <span className={active ? 'absolute -right-1 bottom-0 left-0 h-[3px] bg-[#66d9c8]' : 'absolute inset-x-1.5 bottom-0 h-[3px] bg-[#66d9c8]'} />
              )}
              {name === 'Google Chrome' && <span className="absolute right-1.5 bottom-0 h-[3px] w-2.5 bg-[#4fa89c]" />}
            </button>
          );
        })}
      </div>
      <div className="flex items-center">
        <button className="flex items-center gap-2.5 text-[17px]">
          <svg viewBox="0 0 28 26" className="h-[26px] w-7">
            <path d="M11 1c0 0 0 3 2 5 1.500 1.500 4 2 5 1.500-1 5-5 7-9 7-4 0-8-2-8.500-4C5 11 10 9 11 1z" fill="#f7bd16" />
            <path d="M8 24.500a6 6 0 0 1-1-11.500A7.500 7.500 0 0 1 21 12a6.200 6.200 0 0 1 0 12.500z" fill="#d8ecfb" />
            <path d="M8 24.500a6 6 0 0 1-5.700-4c8 3 16 2 24.500-2A6.200 6.200 0 0 1 21 24.500z" fill="#a9d2f2" />
          </svg>
          <span>66°F</span>
          <span>Mostly cloudy</span>
        </button>
        <button aria-label="Iconos ocultos" className="ml-[22px]">
          <svg viewBox="0 0 16 10" className="h-2.5 w-4"><path d="M.5 9L8 1.500 15.500 9" fill="none" stroke="#fff" strokeWidth="1.300" /></svg>
        </button>
        <svg viewBox="0 0 20 20" className="ml-3 size-5" aria-label="OpenVPN">
          <path d="M5.500 16.500a8 8 0 1 1 9 0" fill="none" stroke="#fff" strokeWidth="4" />
          <circle cx="10" cy="10" r="2.500" fill="#fff" /><path d="M9 11h2l1 8H8z" fill="#fff" />
        </svg>
        <svg viewBox="0 0 16 16" className="ml-[13px] size-4" aria-label="Wi-Fi" fill="none" stroke="#fff" strokeWidth="1.200">
          <path d="M12 15.500a2 2 0 0 1 3-1.500M8.500 15.500A6 6 0 0 1 15.500 10M5 15.500A9.500 9.500 0 0 1 15.500 6M1 15.500A14 14 0 0 1 15.500 1.500" /><path d="M13 14h2.500v2H13z" fill="#fff" stroke="none" />
        </svg>
        <svg viewBox="0 0 21 18" className="ml-[11px] h-[18px] w-[21px]" aria-label="Volumen" fill="none" stroke="#fff" strokeWidth="1.200">
          <path d="M.8 6.200h3L8 2v14L3.800 11.800h-3z" /><path d="M10.800 6.500c1 1.500 1 3.500 0 5M13.500 4.500c2 2.700 2 6.300 0 9" /><path d="M16.500 2.500c3 4 3 9 0 13" stroke="#777" />
        </svg>
        <div className="ml-2.5 flex w-8 flex-col items-center text-sm leading-[23px]">
          <span>ENG</span>
          <span>ES</span>
        </div>
        <div className="ml-[7px] flex w-[84px] flex-col items-center text-sm leading-[23px]">
          <span>9:39 PM</span>
          <span>8/26/2021</span>
        </div>
        <button aria-label="Notificaciones" className="ml-3 flex h-[50px] w-[50px] items-center border-r border-[#6b6b6b] pl-[3px]">
          <span className="relative mt-2.5 size-8">
            <svg viewBox="0 0 32 32" className="size-8">
              <path d="M2 1h20v16H10l-4 4v-4H2z" fill="#fff" />
              <path d="M5 5.500h14M5 9h14M5 12.500h9" stroke="#262729" strokeWidth="1.200" />
              <circle cx="21.500" cy="20.500" r="9.800" fill="#262729" stroke="#8b8b8b" />
            </svg>
            <span className="absolute top-[11px] left-3 grid size-[19px] place-items-center text-xs font-bold">2</span>
          </span>
        </button>
        <span className="w-[3px]" />
      </div>
    </footer>
  );
}

export default function App() {
  return (
    <div className="flex h-screen flex-col overflow-hidden font-['Noto_Sans',sans-serif]">
      <HostTitle />
      <UbuntuBar />
      <div className="relative flex min-h-0 flex-1">
        <Wallpaper />
        <Dock />
        <DesktopIcons />
        <FirefoxWindow />
      </div>
      <StatusBar />
      <Taskbar />
    </div>
  );
}
